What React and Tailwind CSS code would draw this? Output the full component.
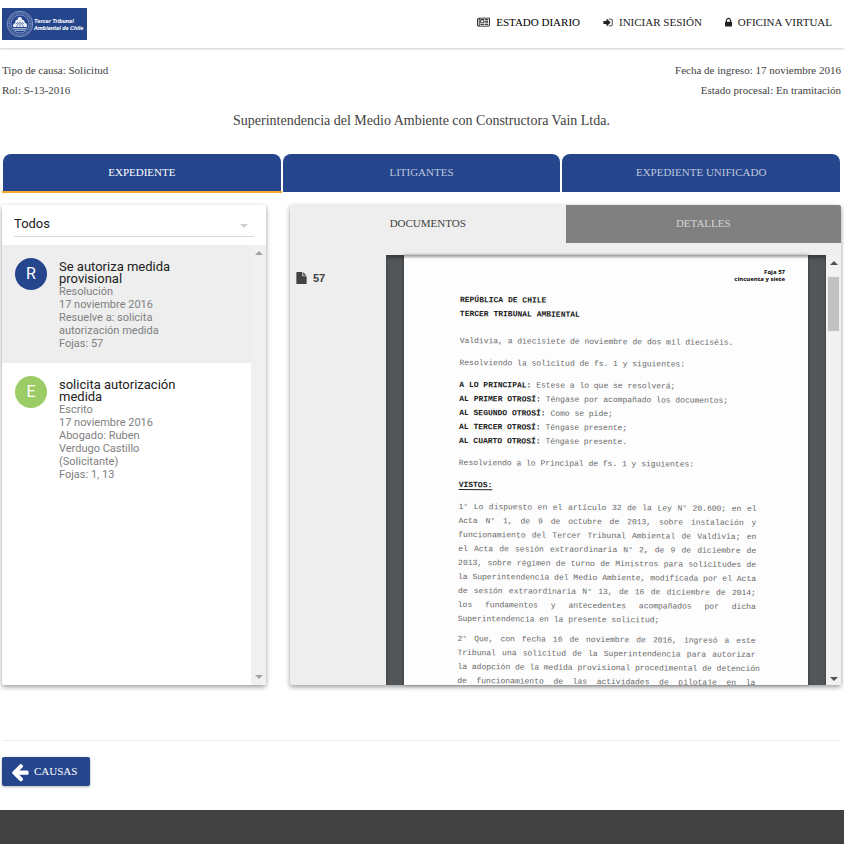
import React from "react";

const PATHS = {
  newspaper: {
    box: "0 0 2048 1792",
    d: "M1024 512h-384v384h384v-384zm128 640v128h-640v-128h640zm0-768v640h-640v-640h640zm640 768v128h-512v-128h512zm0-256v128h-512v-128h512zm0-256v128h-512v-128h512zm0-256v128h-512v-128h512zm-1536 960v-960h-128v960q0 26 19 45t45 19 45-19 19-45zm1664 0v-1088h-1536v1088q0 33-11 64h1483q26 0 45-19t19-45zm128-1216v1216q0 80-56 136t-136 56h-1664q-80 0-136-56t-56-136v-1088h256v-128h1792z",
  },
  signIn: {
    box: "64 0 1664 1792",
    d: "M1312 896q0 26-19 45l-544 544q-19 19-45 19t-45-19-19-45v-288h-448q-26 0-45-19t-19-45v-384q0-26 19-45t45-19h448v-288q0-26 19-45t45-19 45 19l544 544q19 19 19 45zm352-352v704q0 119-84.5 203.5t-203.5 84.5h-320q-13 0-22.5-9.5t-9.5-22.5q0-4-1-20t-.5-26.5 3-23.5 10-19.5 20.5-6.5h320q66 0 113-47t47-113v-704q0-66-47-113t-113-47h-312l-11.5-1-11.5-3-8-5.5-7-9-2-13.5q0-4-1-20t-.5-26.5 3-23.5 10-19.5 20.5-6.5h320q119 0 203.5 84.5t84.5 203.5z",
  },
  lock: {
    box: "320 0 1152 1792",
    d: "M640 768h512v-192q0-106-75-181t-181-75-181 75-75 181v192zm832 96v576q0 40-28 68t-68 28h-960q-40 0-68-28t-28-68v-576q0-40 28-68t68-28h32v-192q0-184 132-316t316-132 316 132 132 316v192h32q40 0 68 28t28 68z",
  },
  arrowLeft: {
    box: "0 0 1792 1792",
    d: "M1664 896v128q0 53-32.5 90.5t-84.5 37.5h-704l293 294q38 36 38 90t-38 90l-75 76q-37 37-90 37-52 0-91-37l-651-652q-37-37-37-90 0-52 37-91l651-650q38-38 91-38 52 0 90 38l75 74q38 38 38 91t-38 91l-293 293h704q52 0 84.5 37.5t32.5 90.5z",
  },
  file: {
    box: "128 0 1536 1792",
    d: "M1152 512v-472q22 14 36 28l408 408q14 14 28 36h-472zm-128 32q0 40 28 68t68 28h544v1056q0 40-28 68t-68 28h-1344q-40 0-68-28t-28-68v-1600q0-40 28-68t68-28h800v544z",
  },
};

function Icon({ name, className }) {
  return (
    <svg viewBox={PATHS[name].box} className={className} fill="currentColor" aria-hidden="true">
      <path d={PATHS[name].d} />
    </svg>
  );
}

function Triangle({ up, className }) {
  return (
    <svg viewBox="0 0 8 4" className={className} fill="currentColor" aria-hidden="true">
      <path d={up ? "M0 4L4 0L8 4Z" : "M0 0L4 4L8 0Z"} />
    </svg>
  );
}

function Logo() {
  return (
    <a href="#" className="flex h-8 w-[85px] items-center bg-[#25458d] pl-1 text-white" aria-label="Tercer Tribunal Ambiental de Chile">
      <svg viewBox="0 0 54 54" className="h-7 w-7 shrink-0" aria-hidden="true">
        <g fill="none" stroke="#dfe6f5">
          <circle cx="27" cy="27" r="24.5" strokeWidth="1.2" opacity="0.8" />
          <circle cx="27" cy="27" r="21" strokeWidth="3.2" strokeDasharray="1.8 1.4 2.6 1.2" pathLength="132" opacity="0.4" />
          <circle cx="27" cy="27" r="17.5" strokeWidth="1.1" opacity="0.8" />
        </g>
        <path fill="#eef2fb" d="M14 33q-2-6 4-8q-1-6 4-6l1-4q4-3 7 0l1 4q5-1 5 5q6 2 4 9z" />
        <path fill="none" stroke="#25458d" strokeWidth="1.3" d="M20 33l5-9M27 33v-11M34 33l-5-9M19 27l4-3M35 27l-4-3" />
        <path stroke="#dfe6f5" strokeWidth="1.6" d="M14 36h26M17 39h20" />
      </svg>
      <span className="whitespace-nowrap font-[Roboto,sans-serif] text-[6px] font-bold italic leading-[7px]">
        Tercer Tribunal
        <br />
        Ambiental de Chile
      </span>
    </a>
  );
}

const NAV = [
  { label: "ESTADO DIARIO", icon: "newspaper", size: "h-[11px] w-[13px]", color: "text-black" },
  { label: "INICIAR SESIÓN", icon: "signIn", size: "h-[11px] w-[10px]", color: "text-[#212121]" },
  { label: "OFICINA VIRTUAL", icon: "lock", size: "h-[11px] w-[7px]", color: "text-[#212121]" },
];

const TABS = ["EXPEDIENTE", "LITIGANTES", "EXPEDIENTE UNIFICADO"];

const ENTRIES = [
  {
    letter: "R",
    circle: "bg-[#25458d]",
    row: "bg-[#eeeeee]",
    title: "Se autoriza medida provisional",
    meta: ["Resolución", "17 noviembre 2016", "Resuelve a: solicita autorización medida", "Fojas: 57"],
  },
  {
    letter: "E",
    circle: "bg-[#9ccc65]",
    row: "bg-white",
    title: "solicita autorización medida",
    meta: ["Escrito", "17 noviembre 2016", "Abogado: Ruben Verdugo Castillo (Solicitante)", "Fojas: 1, 13"],
  },
];

const RULINGS = [
  ["A LO PRINCIPAL:", "Estese a lo que se resolverá;"],
  ["AL PRIMER OTROSÍ:", "Téngase por acompañado los documentos;"],
  ["AL SEGUNDO OTROSÍ:", "Como se pide;"],
  ["AL TERCER OTROSÍ:", "Téngase presente;"],
  ["AL CUARTO OTROSÍ:", "Téngase presente."],
];

function Entry({ entry }) {
  return (
    <li className={`flex gap-3 pl-[13px] ${entry.row}`}>
      <span className={`mt-[13px] flex h-8 w-8 shrink-0 items-center justify-center rounded-full text-base text-white ${entry.circle}`}>
        {entry.letter}
      </span>
      <div className="w-[122px] pb-[13px] pt-4">
        <h2 className="text-[13px] leading-3 text-[#212121]">{entry.title}</h2>
        {entry.meta.map((line) => (
          <p key={line} className="text-[11px] leading-[13px] text-[#808080]">
            {line}
          </p>
        ))}
      </div>
    </li>
  );
}

function CaseList() {
  return (
    <section className="flex flex-col rounded-xs bg-white font-[Roboto,sans-serif] shadow-[0_2px_5px_rgba(0,0,0,0.4)]">
      <div className="flex h-10 items-end px-3 pb-2">
        <div className="relative flex w-full border-b border-[#dcdcdc]">
          <select aria-label="Filtrar trámites" className="h-6 w-full appearance-none bg-transparent text-[13px] text-[#212121] outline-none">
            <option>Todos</option>
          </select>
          <Triangle className="pointer-events-none absolute right-1.5 top-3 h-1 w-2 text-[#d0d0d0]" />
        </div>
      </div>
      <div className="flex flex-1">
        <ul className="flex-1">
          {ENTRIES.map((entry) => (
            <Entry key={entry.letter} entry={entry} />
          ))}
        </ul>
        <div className="flex w-[15px] flex-col items-center justify-between bg-[#f0f0f0] py-1.5 text-[#a3a3a3]">
          <Triangle up className="h-1 w-2" />
          <Triangle className="h-1 w-2" />
        </div>
      </div>
    </section>
  );
}

function ScannedPage() {
  return (
    <article className="relative min-w-0 max-w-[404px] flex-1 overflow-hidden bg-[#fdfdfd] shadow-[0_0_3px_rgba(0,0,0,0.4)]">
      <div className="absolute inset-x-0 top-0 h-1 bg-linear-to-b from-[#9a9a9a] to-[#fdfdfd]" />
      <p className="absolute right-[23px] top-[14px] text-right font-['Open_Sans',sans-serif] text-[6px] font-bold leading-[7px] text-black">
        Foja 57
        <br />
        cincuenta y siete
      </p>
      <div className="absolute left-14 top-[38px] w-[298px] origin-top-left rotate-[0.4deg] font-['Liberation_Mono',monospace] text-[8px] leading-[14px] text-[#666666]">
        <h3 className="font-bold text-[#222222]">
          REPÚBLICA DE CHILE
          <br />
          TERCER TRIBUNAL AMBIENTAL
        </h3>
        <p className="mt-[13px]">Valdivia, a diecisiete de noviembre de dos mil dieciséis.</p>
        <p className="mt-2">Resolviendo la solicitud de fs. 1 y siguientes:</p>
        <div className="mt-2">
          {RULINGS.map(([head, text]) => (
            <p key={head}>
              <b className="text-[#222222]">{head}</b> {text}
            </p>
          ))}
        </div>
        <p className="mt-2">Resolviendo a lo Principal de fs. 1 y siguientes:</p>
        <p className="mt-2 font-bold text-[#222222] underline underline-offset-2">VISTOS:</p>
        <p className="mt-2 text-justify">
          1° Lo dispuesto en el artículo 32 de la Ley N° 20.600; en el Acta N° 1, de 9 de octubre de 2013, sobre
          instalación y funcionamiento del Tercer Tribunal Ambiental de Valdivia; en el Acta de sesión
          extraordinaria N° 2, de 9 de diciembre de 2013, sobre régimen de turno de Ministros para solicitudes de
          la Superintendencia del Medio Ambiente, modificada por el Acta de sesión extraordinaria N° 13, de 16 de
          diciembre de 2014; los fundamentos y antecedentes acompañados por dicha Superintendencia en la presente
          solicitud;
        </p>
        <p className="mt-1.5 whitespace-nowrap text-justify [text-align-last:justify]">
          2° Que, con fecha 16 de noviembre de 2016, ingresó a este
          <br />
          Tribunal una solicitud de la Superintendencia para autorizar
          <br />
          la adopción de la medida provisional procedimental de detención
          <br />
          de funcionamiento de las actividades de pilotaje en la
        </p>
      </div>
    </article>
  );
}

function DocumentPanel() {
  return (
    <section className="flex flex-col rounded-xs bg-[#eeeeee] shadow-[0_2px_5px_rgba(0,0,0,0.4)]">
      <div role="tablist" className="grid grid-cols-2 text-[11px]">
        <button role="tab" aria-selected="true" className="h-[38px] pb-0.5 text-[#424242]">
          DOCUMENTOS
        </button>
        <button role="tab" aria-selected="false" className="h-[38px] rounded-tr-xs bg-[#808080] pb-0.5 text-[#d5d5d5]">
          DETALLES
        </button>
      </div>
      <div className="mt-3 flex flex-1">
        <div className="w-24 shrink-0 pl-1.5 pt-4">
          <a href="#" className="flex items-center gap-1.5 font-['Liberation_Sans',sans-serif] text-[11px] font-bold leading-[14px] text-[#424242]">
            <Icon name="file" className="h-3 w-[11px]" />
            57
          </a>
        </div>
        <div className="flex min-w-0 flex-1 justify-center bg-[#525659] px-[18px] shadow-[inset_0_3px_3px_rgba(0,0,0,0.3)]">
          <ScannedPage />
        </div>
        <div className="flex w-[15px] shrink-0 flex-col items-center bg-[#f1f1f1] pb-1 pt-1.5 text-[#505050]">
          <Triangle up className="h-1 w-2" />
          <div className="mt-3 h-[54px] w-[11px] bg-[#c1c1c1]" />
          <Triangle className="mt-auto h-1 w-2" />
        </div>
      </div>
    </section>
  );
}

export default function App() {
  return (
    <div className="flex min-h-screen flex-col bg-white font-['Liberation_Serif',serif] text-[#424242]">
      <header className="flex h-12 items-center justify-between pl-0.5 pr-3 shadow-[0_1px_2px_rgba(0,0,0,0.2)]">
        <Logo />
        <nav className="flex gap-[23px] pb-1 text-[11px] leading-4">
          {NAV.map((item) => (
            <a key={item.label} href="#" className={`flex items-center gap-1.5 ${item.color}`}>
              <Icon name={item.icon} className={item.size} />
              {item.label}
            </a>
          ))}
        </nav>
      </header>

      <main className="flex-1 pb-6 pl-0.5 pr-[3px] pt-3">
        <div className="flex justify-between text-[11px] leading-5">
          <div>
            <p>Tipo de causa: Solicitud</p>
            <p>Rol: S-13-2016</p>
          </div>
          <div className="text-right">
            <p>Fecha de ingreso: 17 noviembre 2016</p>
            <p>Estado procesal: En tramitación</p>
          </div>
        </div>
        <h1 className="mt-[11px] text-center text-sm">Superintendencia del Medio Ambiente con Constructora Vain Ltda.</h1>

        <div role="tablist" className="mt-[23px] grid grid-cols-3 text-[11px]">
          {TABS.map((tab, i) => (
            <div key={tab} className="relative px-px">
              <button
                role="tab"
                aria-selected={i === 0}
                className={`h-[38px] w-full rounded-t-lg bg-[#25458d] pb-0.5 ${i === 0 ? "text-white" : "text-[#bec7dd]"}`}
              >
                {tab}
              </button>
              {i === 0 && <span className="absolute inset-x-0 -bottom-px h-0.5 bg-[#ffa726]" />}
            </div>
          ))}
        </div>

        <div className="mt-[13px] grid min-h-[480px] grid-cols-[264fr_551fr] gap-6">
          <CaseList />
          <DocumentPanel />
        </div>

        <hr className="mt-[55px] border-[#eeeeee]" />
        <button className="mt-4 flex h-[29px] w-[88px] items-center gap-1 rounded-xs bg-[#25458d] pl-2 text-[11px] text-white shadow-[0_1px_3px_rgba(0,0,0,0.3)]">
          <Icon name="arrowLeft" className="h-5 w-5" />
          CAUSAS
        </button>
      </main>

      <footer className="flex h-[34px] flex-col justify-end bg-[#424242]">
        <div className="h-[3px] bg-[#403e3e]" />
      </footer>
    </div>
  );
}
